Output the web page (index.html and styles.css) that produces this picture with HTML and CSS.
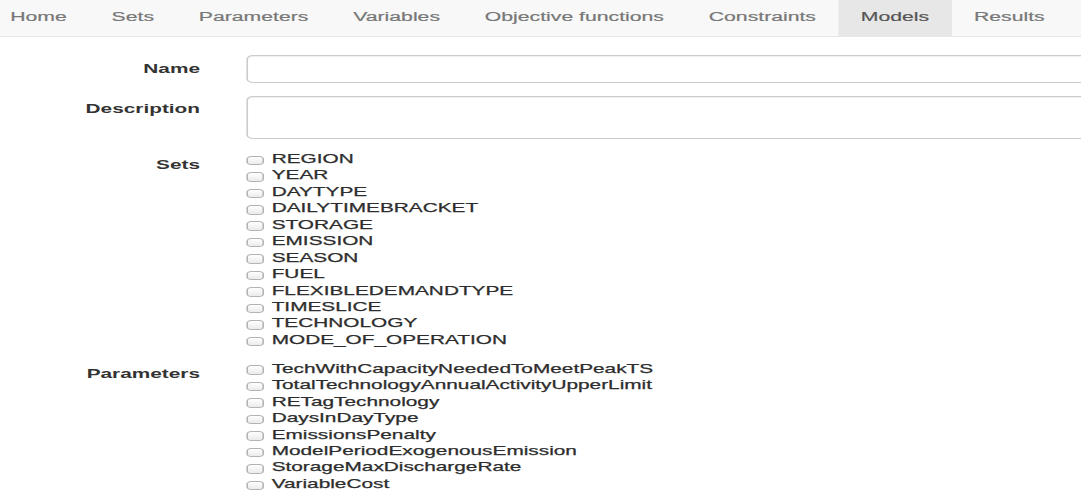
FILE: index.html
```html
<!DOCTYPE html>
<html lang="en">
<head>
<meta charset="utf-8">
<title>Models</title>
<link rel="stylesheet" href="styles.css">
</head>
<body>
<div class="page">
  <nav class="navbar">
    <ul class="nav">
      <li><a href="#">Home</a></li>
      <li><a href="#">Sets</a></li>
      <li><a href="#">Parameters</a></li>
      <li><a href="#">Variables</a></li>
      <li><a href="#">Objective functions</a></li>
      <li><a href="#">Constraints</a></li>
      <li class="active"><a href="#">Models</a></li>
      <li><a href="#">Results</a></li>
    </ul>
  </nav>
  <form class="form">
    <div class="row">
      <label class="row-label" for="name">Name</label>
      <div class="control"><input id="name" class="text-input" type="text"></div>
    </div>
    <div class="row">
      <label class="row-label" for="desc">Description</label>
      <div class="control"><textarea id="desc" class="text-input textarea"></textarea></div>
    </div>
    <div class="row">
      <span class="row-label">Sets</span>
      <div class="control checklist">
        <label class="check"><input type="checkbox"><span>REGION</span></label>
        <label class="check"><input type="checkbox"><span>YEAR</span></label>
        <label class="check"><input type="checkbox"><span>DAYTYPE</span></label>
        <label class="check"><input type="checkbox"><span>DAILYTIMEBRACKET</span></label>
        <label class="check"><input type="checkbox"><span>STORAGE</span></label>
        <label class="check"><input type="checkbox"><span>EMISSION</span></label>
        <label class="check"><input type="checkbox"><span>SEASON</span></label>
        <label class="check"><input type="checkbox"><span>FUEL</span></label>
        <label class="check"><input type="checkbox"><span>FLEXIBLEDEMANDTYPE</span></label>
        <label class="check"><input type="checkbox"><span>TIMESLICE</span></label>
        <label class="check"><input type="checkbox"><span>TECHNOLOGY</span></label>
        <label class="check"><input type="checkbox"><span>MODE_OF_OPERATION</span></label>
      </div>
    </div>
    <div class="row">
      <span class="row-label">Parameters</span>
      <div class="control checklist">
        <label class="check"><input type="checkbox"><span>TechWithCapacityNeededToMeetPeakTS</span></label>
        <label class="check"><input type="checkbox"><span>TotalTechnologyAnnualActivityUpperLimit</span></label>
        <label class="check"><input type="checkbox"><span>RETagTechnology</span></label>
        <label class="check"><input type="checkbox"><span>DaysInDayType</span></label>
        <label class="check"><input type="checkbox"><span>EmissionsPenalty</span></label>
        <label class="check"><input type="checkbox"><span>ModelPeriodExogenousEmission</span></label>
        <label class="check"><input type="checkbox"><span>StorageMaxDischargeRate</span></label>
        <label class="check"><input type="checkbox"><span>VariableCost</span></label>
      </div>
    </div>
  </form>
</div>
</body>
</html>
```
FILE: styles.css
```css
html, body {
  margin: 0;
  padding: 0;
  overflow: hidden;
  background: #fff;
}

body {
  width: 1081px;
  height: 491px;
  font-family: "Liberation Sans", Arial, sans-serif;
  font-size: 13px;
  color: #333;
}

.page {
  width: 675.625px;
  height: 491px;
  overflow: hidden;
  transform: scaleX(1.6);
  transform-origin: 0 0;
}

.navbar {
  background: #f8f8f8;
  border-bottom: 1px solid #e7e7e7;
}

.nav {
  display: flex;
  list-style: none;
  margin: 0;
  padding: 0;
}

.nav a {
  display: block;
  padding: 0 14px 2px;
  line-height: 34px;
  font-size: 13.25px;
  color: #777;
  text-decoration: none;
  white-space: nowrap;
  -webkit-text-stroke: 0.2px currentColor;
}

.nav li:first-child a {
  padding-left: 6.4px;
}

.nav .active a {
  background: #e7e7e7;
  color: #555;
}

.form {
  display: flex;
  flex-direction: column;
  gap: 12.5px;
  margin: 18px 0 0;
}

.row {
  display: grid;
  grid-template-columns: 125px 560px;
  column-gap: 29.2px;
  align-items: start;
}

.row-label {
  text-align: right;
  font-weight: bold;
  line-height: 16.45px;
  padding-top: 5.6px;
  color: #333;
}

.text-input {
  display: block;
  box-sizing: border-box;
  width: 100%;
  height: 28px;
  margin: 0;
  padding: 0 8px;
  border: 1px solid #ccc;
  border-radius: 4px;
  box-shadow: inset 0 1px 1px rgba(0, 0, 0, 0.075);
  background: #fff;
  font: inherit;
}

.textarea {
  height: 43px;
  resize: none;
}

.checklist {
  display: flex;
  flex-direction: column;
}

.check {
  display: flex;
  align-items: center;
  height: 16.45px;
  line-height: 16.45px;
  white-space: nowrap;
  color: #2d2d2d;
  -webkit-text-stroke: 0.25px currentColor;
}

.check input {
  -webkit-appearance: none;
  appearance: none;
  flex: none;
  box-sizing: border-box;
  width: 11px;
  height: 9.5px;
  margin: 2.5px 4.6px 0 0;
  border: 1px solid #b3b3b3;
  border-radius: 3px;
  background: linear-gradient(#fff, #ebebeb);
}
```
